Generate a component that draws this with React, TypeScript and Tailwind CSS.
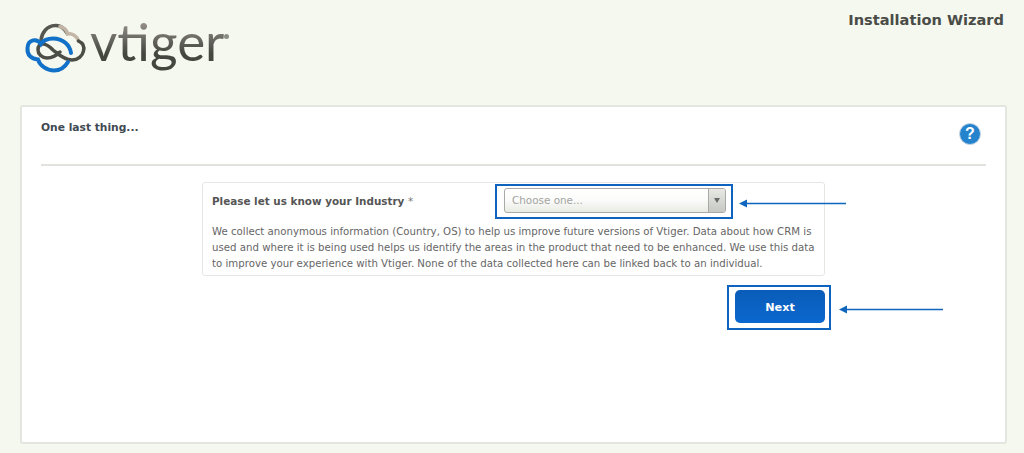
const bodyFont = "font-['DejaVu_Sans',sans-serif]";

function Logo() {
  return (
    <div className="flex items-start">
      <svg width="64" height="52" viewBox="24 22 64 52" fill="none" strokeLinecap="round" className="mt-[22px] ml-[24px]">
        {/* dark and tan cloud */}
        <path d="M41 40C42 32 47 26 55 25.500C60 25 64 28 67 33" stroke="#55564f" strokeWidth="3.500" />
        <path d="M60 26.500C65 28 67 31 67.500 34C72 33 77 36 78.500 41" stroke="#c2b5a6" strokeWidth="3.500" />
        <path d="M78.500 41C83 43 84.500 47 83.500 51C82.500 56 78 60 72 60C64 60 58 54 53 50C49 46 46 44 43 44C39 44 38 47 38 50C38 54 42 58 47 58C53 58 58 54 60 52" stroke="#4c4d47" strokeWidth="3.500" />
        {/* blue cloud */}
        <path d="M71 53C70 45 63 38.500 53 38.500C47 38.500 43 41 41 44C37 38 28 39 27.500 48C27 55 31 59 38 59.500C40 66 47 70.500 54 70.500C60 70.500 65 67 68 62" stroke="#1170c8" strokeWidth="4" />
      </svg>
      <span className="mt-[9px] ml-[2px] font-['Lato',sans-serif] font-normal text-[53px] leading-[64px] bg-gradient-to-b from-[#8f8a86] from-[25%] to-[#44463f] to-[70%] bg-clip-text text-transparent">
        vtiger
      </span>
      <span className="mt-[34px] w-[5px] h-[5px] rounded-full bg-[#8b8c86]" />
    </div>
  );
}

function Arrow({ width }: { width: number }) {
  return (
    <svg width={width} height="9" viewBox={`0 0 ${width} 9`} className="block">
      <path d={`M7 4.500H${width}`} stroke="#0f66bd" strokeWidth="1.500" />
      <path d="M0 4.500L8 0.500V8.500Z" fill="#0f66bd" />
    </svg>
  );
}

function HelpIcon() {
  return (
    <div className="w-[22px] h-[22px] rounded-full bg-[#2583cd] border border-[#c4d4e2] flex items-center justify-center text-white font-bold text-[16px] leading-none font-['Liberation_Sans',sans-serif]">
      ?
    </div>
  );
}

export default function App() {
  return (
    <div className={`w-[1024px] h-[453px] overflow-hidden bg-[#f5f8ee] ${bodyFont}`}>
      <header className="h-[105px] flex justify-between items-start">
        <Logo />
        <h1 className="mt-[11px] mr-[20px] text-[14.600px] leading-[18px] font-bold text-[#4a4c48]">Installation Wizard</h1>
      </header>

      <main className="ml-[20px] w-[987px] h-[339px] bg-white border-2 border-[#e3e5df] rounded-[3px] px-[19px]">
        <div className="h-[59px] border-b-2 border-[#e0e2dd] flex justify-between items-start">
          <h2 className="mt-[13px] text-[10.700px] leading-[16px] font-bold text-[#414a52]">One last thing...</h2>
          <div className="mt-[16px] mr-[5px]">
            <HelpIcon />
          </div>
        </div>

        <section className="mt-[16px] mx-auto w-[623px] h-[94px] border border-[#e6e7e3] rounded-[3px] pl-[9px] pr-[8px]">
          <div className="h-[41px] flex items-start">
            <label className="w-[293px] mt-[10px] text-[10.400px] leading-[16px] font-bold text-[#555]">
              Please let us know your Industry <span className="font-normal text-[#777]">*</span>
            </label>
            <div className="relative mt-[5px] ml-[-1px] w-[222px] h-[25px] rounded-[3px] border border-[#a9aaa5] bg-gradient-to-b from-white via-[#fbfcfa] to-[#e8eae3] flex">
              <span className="flex-1 pl-[7px] text-[10.400px] leading-[23px] text-[#a3a3a0]">Choose one...</span>
              <span className="w-[17px] border-l border-[#a9aaa5] bg-gradient-to-b from-[#e8e9e5] to-[#c6c8c4] flex items-center justify-center rounded-r-[2px]">
                <span className="w-0 h-0 border-x-[3.500px] border-x-transparent border-t-[5px] border-t-[#6a6a6a]" />
              </span>
              <div className="absolute left-[-10px] right-[-8px] top-[-5px] bottom-[-7px] border-2 border-[#0d63bd] pointer-events-none" />
              <div className="absolute left-[234px] top-[10px]">
                <Arrow width={107} />
              </div>
            </div>
          </div>
          <p className="text-[10.200px] leading-[16px] text-[#666] whitespace-nowrap">
            We collect anonymous information (Country, OS) to help us improve future versions of Vtiger. Data about how CRM is
            <br />
            used and where it is being used helps us identify the areas in the product that need to be enhanced. We use this data
            <br />
            to improve your experience with Vtiger. None of the data collected here can be linked back to an individual.
          </p>
        </section>

        <div className="mt-[14px] w-[784px] flex justify-end">
          <div className="relative">
            <button className="block w-[90px] h-[33px] pt-[3px] rounded-[5px] bg-gradient-to-b from-[#0a5cb8] to-[#0b68cf] text-white text-[11.200px] font-bold">
              Next
            </button>
            <div className="absolute left-[-8px] right-[-6px] top-[-5px] bottom-[-7px] border-2 border-[#0d63bd] pointer-events-none" />
            <div className="absolute left-[104px] top-[15px]">
              <Arrow width={104} />
            </div>
          </div>
        </div>
      </main>
    </div>
  );
}
